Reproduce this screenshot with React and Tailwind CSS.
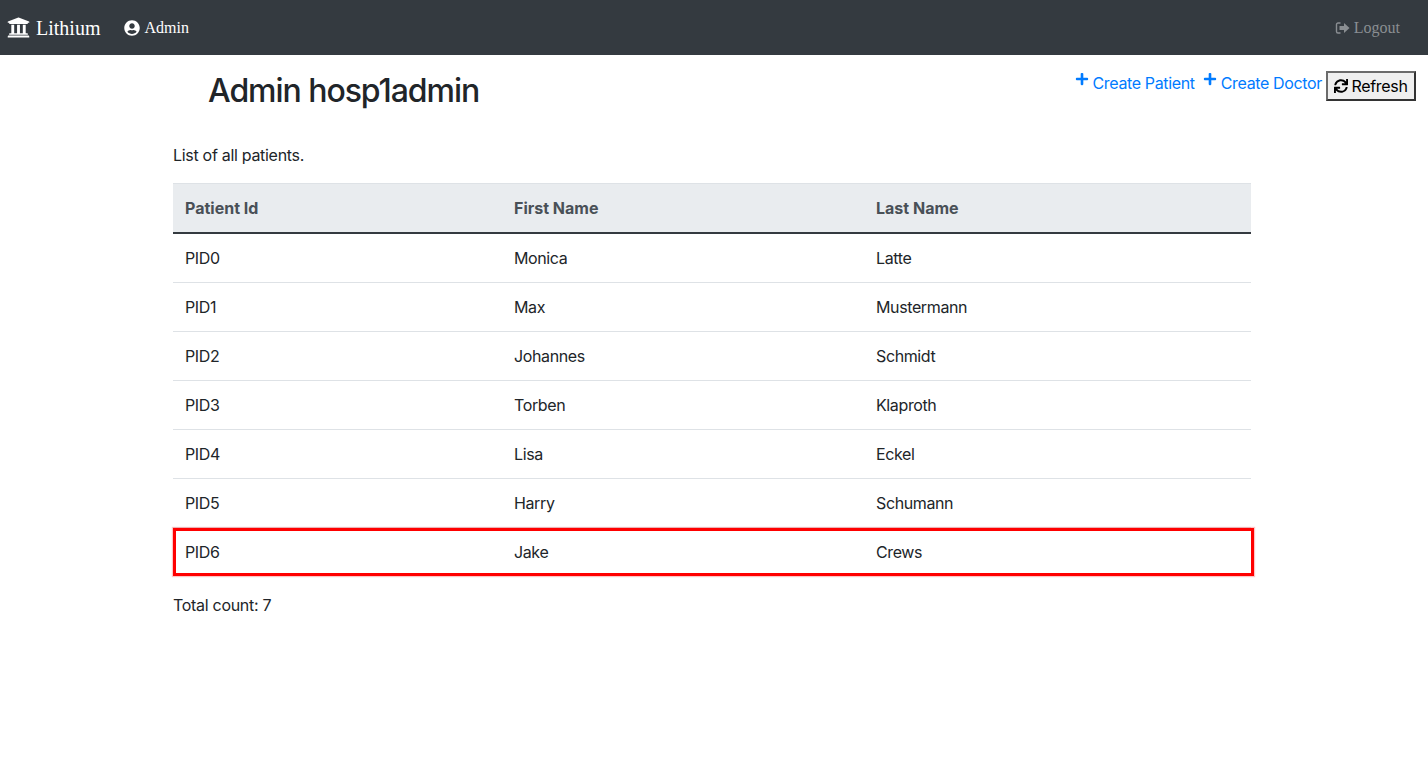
import React from 'react';
import { FaUniversity, FaUserCircle, FaPlus, FaSync } from 'react-icons/fa';

const patients = [
  ['PID0', 'Monica', 'Latte'],
  ['PID1', 'Max', 'Mustermann'],
  ['PID2', 'Johannes', 'Schmidt'],
  ['PID3', 'Torben', 'Klaproth'],
  ['PID4', 'Lisa', 'Eckel'],
  ['PID5', 'Harry', 'Schumann'],
  ['PID6', 'Jake', 'Crews'],
];

const LogoutIcon = () => (
  <svg width="15" height="14" viewBox="0 0 15 14" fill="none">
    <path d="M5.5 2H3a1.5 1.5 0 0 0-1.5 1.5v7A1.5 1.5 0 0 0 3 12h2.5" stroke="currentColor" strokeWidth="1.4" />
    <path d="M4.5 5h4.5V2L14.5 7 9 12V9H4.5z" fill="currentColor" />
  </svg>
);

const Navbar = () => (
  <nav className="h-[55px] bg-[#343a40] flex items-center justify-between pl-[7px] pr-7 font-['Liberation_Serif',serif]">
    <div className="flex items-center">
      <span className="flex items-center gap-[6px] text-white text-[20px]">
        <FaUniversity size={23} />
        Lithium
      </span>
      <span className="flex items-center gap-[4px] ml-6 text-white text-[16px]">
        <FaUserCircle size={16} />
        Admin
      </span>
    </div>
    <span className="flex items-center gap-[4px] text-[#8a8e92] text-[16px]">
      <LogoutIcon />
      Logout
    </span>
  </nav>
);

const ActionLink = ({ children }) => (
  <a href="#" className="flex items-start text-[#007bff] text-[16px] leading-6 tracking-[-0.35px]">
    <FaPlus size={14} className="mt-[1px] mr-[4px]" />
    <span>{children}</span>
  </a>
);

export default function App() {
  return (
    <div className="min-h-[783px] bg-white text-[#212529] font-['Inter','Liberation_Sans',sans-serif] text-[16px]">
      <Navbar />
      <main className="ml-[173px] mr-[12px]">
        <div className="flex items-start justify-between h-[72px]">
          <h1 className="ml-[35px] mt-[16px] text-[32px] leading-[40px] font-medium tracking-[-1.05px]">Admin hosp1admin</h1>
          <div className="flex items-start gap-[8px] mt-[16px]">
            <ActionLink>Create Patient</ActionLink>
            <ActionLink>Create Doctor</ActionLink>
            <button className="ml-[-4px] h-[30px] w-[90px] flex items-center justify-center gap-[3px] bg-[#efefef] border-2 border-t-[#6b6b6b] border-l-[#6b6b6b] border-r-[#333333] border-b-[#333333] text-black text-[16px] tracking-[-0.3px]">
              <FaSync size={14} />
              Refresh
            </button>
          </div>
        </div>

        <p className="mt-[16px] leading-6 tracking-[-0.3px]">List of all patients.</p>

        <div className="relative mt-[16px] w-[1078px]">
          <table className="w-full table-fixed border-collapse">
            <thead>
              <tr className="h-[49px] bg-[#e9ecef] text-[#495057] border-t border-[#dee2e6] border-b-2 border-b-[#343a40]">
                <th className="w-[329px] pl-3 text-left font-bold">Patient Id</th>
                <th className="w-[362px] pl-3 text-left font-bold">First Name</th>
                <th className="pl-3 text-left font-bold">Last Name</th>
              </tr>
            </thead>
            <tbody className="tracking-[-0.38px]">
              {patients.map(([id, first, last], i) => (
                <tr key={id} className={i === 0 ? 'h-[50px]' : 'h-[49px] border-t border-[#dee2e6]'}>
                  <td className="pl-3">{id}</td>
                  <td className="pl-3">{first}</td>
                  <td className="pl-3">{last}</td>
                </tr>
              ))}
            </tbody>
          </table>
          <div className="absolute left-0 bottom-[1px] w-[1081px] h-[48px] border-[3px] border-[#ff0000] shadow-[0_0_1px_1px_rgba(255,90,90,0.35)]" />
        </div>

        <p className="mt-[16px] leading-6 tracking-[-0.3px]">Total count: 7</p>
      </main>
    </div>
  );
}
